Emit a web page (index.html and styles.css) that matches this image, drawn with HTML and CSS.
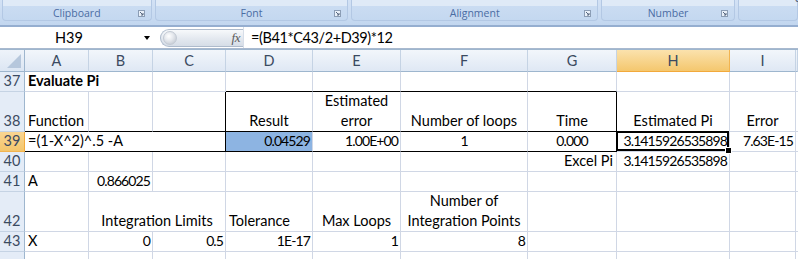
FILE: index.html
```html
<!DOCTYPE html>
<html lang="en">
<head>
    <meta charset="UTF-8">
    <title>Evaluate Pi</title>
    <link rel="stylesheet" href="styles.css">
</head>
<body>
    <!-- Ribbon (bottom edge only) -->
    <div class="ribbon">
        <div class="group g-clip"><span></span><span class="label">Clipboard</span><span class="launch"><svg width="7" height="7" viewBox="0 0 7 7"><rect x="0.5" y="0.5" width="6" height="6" fill="#e9f0f9" stroke="#8b9db5"/><path d="M2 2 L5 5 M5 3 V5 H3" stroke="#56677f" fill="none"/></svg></span></div>
        <div class="group g-font"><span></span><span class="label">Font</span><span class="launch"><svg width="7" height="7" viewBox="0 0 7 7"><rect x="0.5" y="0.5" width="6" height="6" fill="#e9f0f9" stroke="#8b9db5"/><path d="M2 2 L5 5 M5 3 V5 H3" stroke="#56677f" fill="none"/></svg></span></div>
        <div class="group g-align"><span></span><span class="label">Alignment</span><span class="launch"><svg width="7" height="7" viewBox="0 0 7 7"><rect x="0.5" y="0.5" width="6" height="6" fill="#e9f0f9" stroke="#8b9db5"/><path d="M2 2 L5 5 M5 3 V5 H3" stroke="#56677f" fill="none"/></svg></span></div>
        <div class="group g-num"><span></span><span class="label">Number</span><span class="launch"><svg width="7" height="7" viewBox="0 0 7 7"><rect x="0.5" y="0.5" width="6" height="6" fill="#e9f0f9" stroke="#8b9db5"/><path d="M2 2 L5 5 M5 3 V5 H3" stroke="#56677f" fill="none"/></svg></span></div>
        <div class="group g-styles"><span class="cut">Formatting</span></div>
    </div>

    <!-- Formula bar -->
    <div class="formula-bar">
        <div class="name-box"><span class="name">H39</span><span class="arrow"></span></div>
        <div class="fx-box"><span class="knob"></span><span class="fx">fx</span></div>
        <div class="formula">=(B41*C43/2+D39)*12</div>
    </div>

    <!-- Sheet -->
    <div class="sheet">
        <div class="corner"><span class="tri"></span></div>
        <div class="ch">A</div><div class="ch">B</div><div class="ch">C</div><div class="ch">D</div><div class="ch">E</div>
        <div class="ch">F</div><div class="ch">G</div><div class="ch sel">H</div><div class="ch">I</div><div class="ch"></div>

        <div class="rh">37</div>
        <div class="c span2 bold">Evaluate Pi</div><div class="c"></div>
        <div class="c bb"></div><div class="c bb"></div><div class="c bb"></div><div class="c bb"></div>
        <div class="c"></div><div class="c"></div><div class="c"></div>

        <div class="rh">38</div>
        <div class="c bb">Function</div><div class="c bb"></div><div class="c bb br"></div>
        <div class="c bb ctr">Result</div>
        <div class="c bb ctr">Estimated<br>error</div>
        <div class="c bb ctr">Number of loops</div>
        <div class="c bb br ctr">Time</div>
        <div class="c ctr">Estimated Pi</div>
        <div class="c ctr">Error</div>
        <div class="c"></div>

        <div class="rh sel">39</div>
        <div class="c span3 bb br">=(1-X^2)^.5 -A</div>
        <div class="c bb r num fill">0.04529</div>
        <div class="c bb r num">1.00E+00</div>
        <div class="c bb ctr num">1</div>
        <div class="c bb br ctr num">0.000</div>
        <div class="c r num active">3.1415926535898</div>
        <div class="c r num">7.63E-15</div>
        <div class="c"></div>

        <div class="rh">40</div>
        <div class="c"></div><div class="c"></div><div class="c"></div><div class="c"></div><div class="c"></div><div class="c"></div>
        <div class="c r">Excel Pi</div>
        <div class="c r num">3.1415926535898</div>
        <div class="c"></div><div class="c"></div>

        <div class="rh">41</div>
        <div class="c">A</div>
        <div class="c r num">0.866025</div>
        <div class="c"></div><div class="c"></div><div class="c"></div><div class="c"></div><div class="c"></div><div class="c"></div><div class="c"></div><div class="c"></div>

        <div class="rh">42</div>
        <div class="c"></div>
        <div class="c span2 ctr">Integration Limits</div>
        <div class="c">Tolerance</div>
        <div class="c ctr">Max Loops</div>
        <div class="c ctr">Number of<br>Integration Points</div>
        <div class="c"></div><div class="c"></div><div class="c"></div><div class="c"></div>

        <div class="rh">43</div>
        <div class="c">X</div>
        <div class="c r num">0</div>
        <div class="c r num">0.5</div>
        <div class="c r num">1E-17</div>
        <div class="c r num">1</div>
        <div class="c r num">8</div>
        <div class="c"></div><div class="c"></div><div class="c"></div><div class="c"></div>

        <div class="rh"></div>
        <div class="c"></div><div class="c"></div><div class="c"></div><div class="c"></div><div class="c"></div>
        <div class="c"></div><div class="c"></div><div class="c"></div><div class="c"></div><div class="c"></div>
    </div>
</body>
</html>
```

FILE: styles.css
```css
body {
    margin: 0;
    width: 798px;
    height: 259px;
    overflow: hidden;
    background: #ffffff;
    font-family: Lato, "Noto Sans", sans-serif;
    font-size: 14.5px;
    color: #000;
}

/* Ribbon */
.ribbon {
    height: 25px;
    display: flex;
    gap: 3px;
    padding-left: 2px;
    background: linear-gradient(#d3e2f5, #c2d6ef);
    border-bottom: 2px solid #95aed0;
    overflow: hidden;
}
.group {
    height: 21px;
    display: grid;
    grid-template-columns: 1fr auto 1fr;
    align-items: center;
    box-sizing: border-box;
    padding: 6px 6px 0;
    background: linear-gradient(#dfeaf7 0, #dfeaf7 6px, #cadcf2 6px, #c4d8f0 100%);
    border: 1px solid #b3c8e4;
    border-top: none;
    border-radius: 0 0 4px 4px;
    font-family: "Open Sans", sans-serif;
    font-size: 10.5px;
    color: #4a6ca3;
}
.group .label {
    line-height: 14px;
}
.group .launch {
    justify-self: end;
    display: flex;
}
.g-clip { width: 152px; }
.g-font { width: 197px; }
.g-align { width: 251px; }
.g-num { width: 136px; }
.g-styles {
    width: 60px;
    display: block;
    padding: 0 6px;
    color: #2d3f5a;
}
.g-styles .cut {
    display: block;
    margin-top: -12px;
    font-size: 11px;
    line-height: 14px;
}

/* Formula bar */
.formula-bar {
    height: 21px;
    display: flex;
    align-items: center;
    background: #fff;
    border-bottom: 1px solid #a9b9cf;
}
.name-box {
    width: 158px;
    display: flex;
    align-items: center;
    padding-right: 4px;
    box-sizing: border-box;
}
.name {
    flex: 1;
    text-align: center;
    padding-right: 6px;
}
.arrow {
    width: 0;
    height: 0;
    border-left: 3px solid transparent;
    border-right: 3px solid transparent;
    border-top: 4px solid #000;
    margin-right: 4px;
}
.fx-box {
    width: 83px;
    height: 18px;
    box-sizing: border-box;
    display: flex;
    align-items: center;
    justify-content: space-between;
    padding: 0 3px 0 2px;
    margin-left: 2px;
    background: linear-gradient(#f7f9fb, #e3e8ef 55%, #d6dde7);
    border: 1px solid #aebbcc;
    border-right: none;
    border-radius: 9px 0 0 9px;
}
.knob {
    width: 12px;
    height: 12px;
    border-radius: 50%;
    background: radial-gradient(circle at 40% 35%, #ffffff 0, #e6e9ee 40%, #b9c0ca 100%);
    border: 1px solid #c3cad4;
}
.fx {
    font-family: "Liberation Serif", serif;
    font-style: italic;
    font-size: 13px;
    color: #5a5a5a;
    letter-spacing: -0.5px;
}
.formula {
    flex: 1;
    height: 21px;
    line-height: 21px;
    padding-left: 7px;
    border-left: 1px solid #d7dee8;
    letter-spacing: -0.4px;
}

/* Sheet */
.sheet {
    display: grid;
    grid-template-columns: 25px 64px 64px 73px 87px 88px 127px 89px 113px 66px 2px;
    grid-template-rows: 22px 20px 40px 20px 20px 20px 40px 20px 20px;
    border-top: 1px solid #9eb6ce;
}
.sheet > div {
    box-sizing: border-box;
}
.corner {
    background: linear-gradient(#eef3fa, #dce6f3);
    border-right: 1px solid #9eb6ce;
    border-bottom: 1px solid #9eb6ce;
    display: flex;
    justify-content: flex-end;
    align-items: flex-end;
    padding: 0 3px 3px 0;
}
.tri {
    width: 0;
    height: 0;
    border-left: 14px solid transparent;
    border-bottom: 14px solid #b6c7dc;
}
.ch {
    background: linear-gradient(#f2f6fb, #dfe8f4);
    border-right: 1px solid #c5d3e4;
    border-bottom: 1px solid #9eb6ce;
    color: #3b4a61;
    text-align: center;
    line-height: 21px;
}
.ch.sel {
    background: linear-gradient(#fbe2ad, #f4c76e);
    border-right-color: #f2b450;
    border-bottom-color: #f2a93b;
}
.rh {
    background: #e4ecf7;
    border-right: 1px solid #9eb6ce;
    border-bottom: 1px solid #c5d3e4;
    color: #3b4a61;
    display: flex;
    align-items: flex-end;
    justify-content: center;
    line-height: 20px;
}
.rh.sel {
    background: linear-gradient(#f9d592, #f4c66c);
    border-bottom-color: #f2b450;
    border-right-color: #f2a93b;
}
.c {
    border-right: 1px solid #d0d7e5;
    border-bottom: 1px solid #d0d7e5;
    display: flex;
    align-items: flex-end;
    padding: 0 3px;
    line-height: 20px;
    white-space: nowrap;
}
.c.r { justify-content: flex-end; }
.c.ctr { justify-content: center; text-align: center; }
.c.bold { font-weight: bold; }
.c.span2 { grid-column: span 2; }
.c.span3 { grid-column: span 3; }
.c.bb { border-bottom-color: #000; }
.c.br { border-right-color: #000; }
.c.fill { background: #8db4e2; }
.c.num {
    font-size: 14px;
    letter-spacing: -0.9px;
}
.c.r.num { padding-right: 2px; }

/* Active cell */
.c.active {
    position: relative;
}
.c.active::after {
    content: "";
    position: absolute;
    top: -1px;
    left: -1px;
    right: 0;
    bottom: 0;
    border: 2px solid #000;
}
.c.active::before {
    content: "";
    position: absolute;
    right: -3px;
    bottom: -3px;
    width: 5px;
    height: 5px;
    background: #000;
    border: 1px solid #fff;
    z-index: 1;
}
```
